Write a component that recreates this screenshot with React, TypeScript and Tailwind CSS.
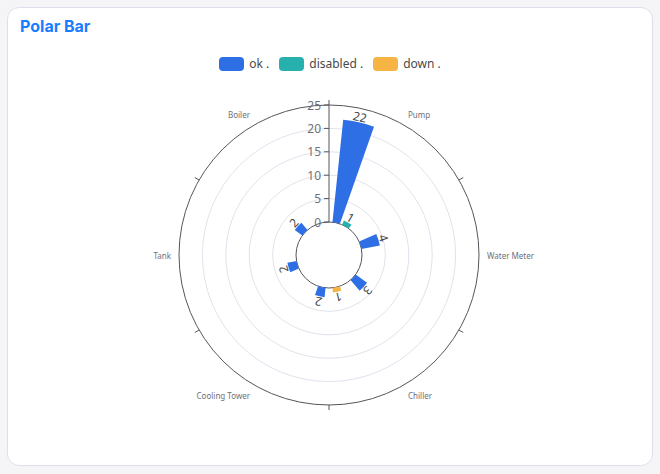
import React from "react";

const CX = 329;
const CY = 255;
const R0 = 33;
const R1 = 150;
const UNIT = (R1 - R0) / 25;

const COLORS = { ok: "#2f6fe6", disabled: "#27b0ad", down: "#f6b543" };

const categories = ["Pump", "Water Meter", "Chiller", "Cooling Tower", "Tank", "Boiler"];
const data: { ok: number; disabled: number; down: number }[] = [
  { ok: 22, disabled: 1, down: 0 },
  { ok: 4, disabled: 0, down: 0 },
  { ok: 3, disabled: 0, down: 1 },
  { ok: 2, disabled: 0, down: 0 },
  { ok: 2, disabled: 0, down: 0 },
  { ok: 2, disabled: 0, down: 0 },
];

const rad = (d: number) => (d * Math.PI) / 180;
const pt = (r: number, a: number): [number, number] => [
  CX + r * Math.sin(rad(a)),
  CY - r * Math.cos(rad(a)),
];

function sector(r0: number, r1: number, a0: number, a1: number) {
  const [x1, y1] = pt(r0, a0);
  const [x2, y2] = pt(r1, a0);
  const [x3, y3] = pt(r1, a1);
  const [x4, y4] = pt(r0, a1);
  return `M${x1} ${y1} L${x2} ${y2} A${r1} ${r1} 0 0 1 ${x3} ${y3} L${x4} ${y4} A${r0} ${r0} 0 0 0 ${x1} ${y1} Z`;
}

const offsets: { key: "ok" | "disabled" | "down"; a0: number; a1: number }[] = [
  { key: "ok", a0: 6, a1: 19.33 },
  { key: "disabled", a0: 23.33, a1: 36.67 },
  { key: "down", a0: 40.67, a1: 54 },
];

function Chart() {
  const bars: React.ReactNode[] = [];
  const labels: React.ReactNode[] = [];
  data.forEach((d, i) => {
    const base = i * 60;
    offsets.forEach((o) => {
      const v = d[o.key];
      if (!v) return;
      const a0 = base + o.a0;
      const a1 = base + o.a1;
      const re = R0 + v * UNIT;
      bars.push(<path key={`${i}-${o.key}`} d={sector(R0, re, a0, a1)} fill={COLORS[o.key]} />);
      const mid = (a0 + a1) / 2;
      const [lx, ly] = pt(re + 5.5, mid);
      labels.push(
        <text
          key={`l-${i}-${o.key}`}
          x={0}
          y={0}
          transform={`translate(${lx} ${ly}) rotate(${mid})`}
          textAnchor="middle"
          dominantBaseline="central"
          fontSize={12}
          fill="#464646"
        >
          {v}
        </text>
      );
    });
  });

  return (
    <svg width={644} height={380} className="block mt-[9px] font-['Noto_Sans',sans-serif]">
      <g transform="translate(-8 -80)">
        {[1, 2, 3, 4].map((k) => (
          <circle key={k} cx={CX} cy={CY} r={R0 + k * 5 * UNIT} fill="none" stroke="#e0e3ec" strokeWidth={1} />
        ))}
        <circle cx={CX} cy={CY} r={R1} fill="none" stroke="#55565c" strokeWidth={1} />
        <circle cx={CX} cy={CY} r={R0} fill="none" stroke="#55565c" strokeWidth={1} />
        {[0, 60, 120, 180, 240, 300].map((a) => {
          const [x1, y1] = pt(R1, a);
          const [x2, y2] = pt(R1 + 5, a);
          return <line key={a} x1={x1} y1={y1} x2={x2} y2={y2} stroke="#55565c" strokeWidth={1} />;
        })}
        <line x1={CX} y1={CY - R0} x2={CX} y2={CY - R1} stroke="#55565c" strokeWidth={1} />
        {[0, 5, 10, 15, 20, 25].map((v) => {
          const y = CY - (R0 + v * UNIT);
          return (
            <g key={v}>
              <line x1={CX - 5} y1={y} x2={CX} y2={y} stroke="#55565c" strokeWidth={1} />
              <text x={CX - 8} y={y} textAnchor="end" dominantBaseline="central" fontSize={12} fill="#6e7079">
                {v}
              </text>
            </g>
          );
        })}
        {bars}
        {labels}
        {categories.map((c, i) => {
          const a = i * 60 + 30;
          const [x, y0] = pt(158, a);
          const s = Math.sin(rad(a));
          const co = Math.cos(rad(a));
          const anchor = s > 0.01 ? "start" : s < -0.01 ? "end" : "middle";
          const y = co > 0.01 ? y0 - 4 : co < -0.01 ? y0 + 4 : y0;
          return (
            <text key={c} x={x} y={y} textAnchor={anchor} dominantBaseline="central" fontSize={8} fill="#6e7079">
              {c}
            </text>
          );
        })}
      </g>
    </svg>
  );
}

function LegendItem({ color, label }: { color: string; label: string }) {
  return (
    <div className="flex items-center gap-[5px]">
      <span className="block w-[25px] h-[14px] rounded-[4px]" style={{ backgroundColor: color }} />
      <span className="text-[12px] leading-[14px] text-[#4a4a4a] font-['Noto_Sans',sans-serif]">{label}</span>
    </div>
  );
}

export default function App() {
  return (
    <div className="w-[660px] h-[474px] bg-[#f5f5f7] p-[7px]">
      <div className="w-[646px] h-[459px] bg-white border border-[#dde0ea] rounded-[12px] overflow-hidden">
        <div className="pt-[6px] pl-[12px] text-[16px] leading-[24px] font-bold text-[#1a7cff] font-['Inter',sans-serif]">
          Polar Bar
        </div>
        <div className="mt-[19px] h-[14px] flex justify-center gap-[10px]">
          <LegendItem color={COLORS.ok} label="ok ." />
          <LegendItem color={COLORS.disabled} label="disabled ." />
          <LegendItem color={COLORS.down} label="down ." />
        </div>
        <Chart />
      </div>
    </div>
  );
}
